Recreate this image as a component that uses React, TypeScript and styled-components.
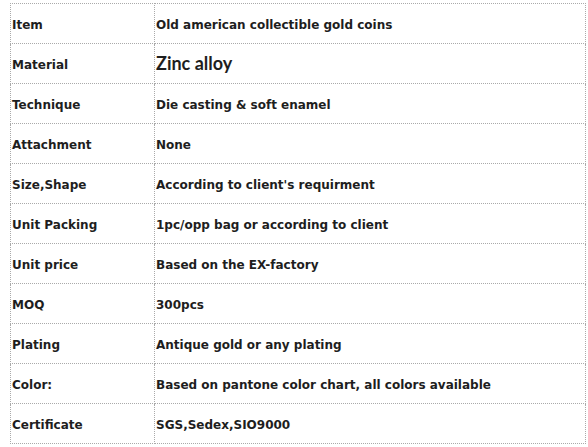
import React from "react";
import styled, { createGlobalStyle } from "styled-components";

const Global = createGlobalStyle`
  html, body { margin: 0; padding: 0; background: #fff; }
`;

const Page = styled.div`
  padding: 3px 0 0 10px;
`;

const Table = styled.table`
  border-collapse: collapse;
  width: 576px;
  table-layout: fixed;
  font-family: "DejaVu Sans", Tahoma, sans-serif;
  font-weight: bold;
  font-size: 12px;
  color: #1e1e1e;
`;

const Cell = styled.td<{ $first?: boolean; $big?: boolean }>`
  border: 1px dotted #aaa;
  height: 36px;
  padding: 3px 0 0 1px;
  width: ${(p) => (p.$first ? "142px" : "auto")};
  vertical-align: middle;
  white-space: nowrap;
  ${(p) =>
    p.$big
      ? `font-family: Lato, "Open Sans", sans-serif; font-weight: 700; font-size: 18px; padding-top: 0; padding-bottom: 1px;`
      : ""}
`;

const rows: [string, string, boolean?][] = [
  ["Item", "Old american collectible gold coins"],
  ["Material", "Zinc alloy", true],
  ["Technique", "Die casting & soft enamel"],
  ["Attachment", "None"],
  ["Size,Shape", "According to client's requirment"],
  ["Unit Packing", "1pc/opp bag or according to client"],
  ["Unit price", "Based on the EX-factory"],
  ["MOQ", "300pcs"],
  ["Plating", "Antique gold or any plating"],
  ["Color:", "Based on pantone color chart, all colors available"],
  ["Certificate", "SGS,Sedex,SIO9000"],
];

export default function App() {
  return (
    <Page>
      <Global />
      <Table>
        <tbody>
          {rows.map(([k, v, big]) => (
            <tr key={k}>
              <Cell $first>{k}</Cell>
              <Cell $big={big}>{v}</Cell>
            </tr>
          ))}
        </tbody>
      </Table>
    </Page>
  );
}
